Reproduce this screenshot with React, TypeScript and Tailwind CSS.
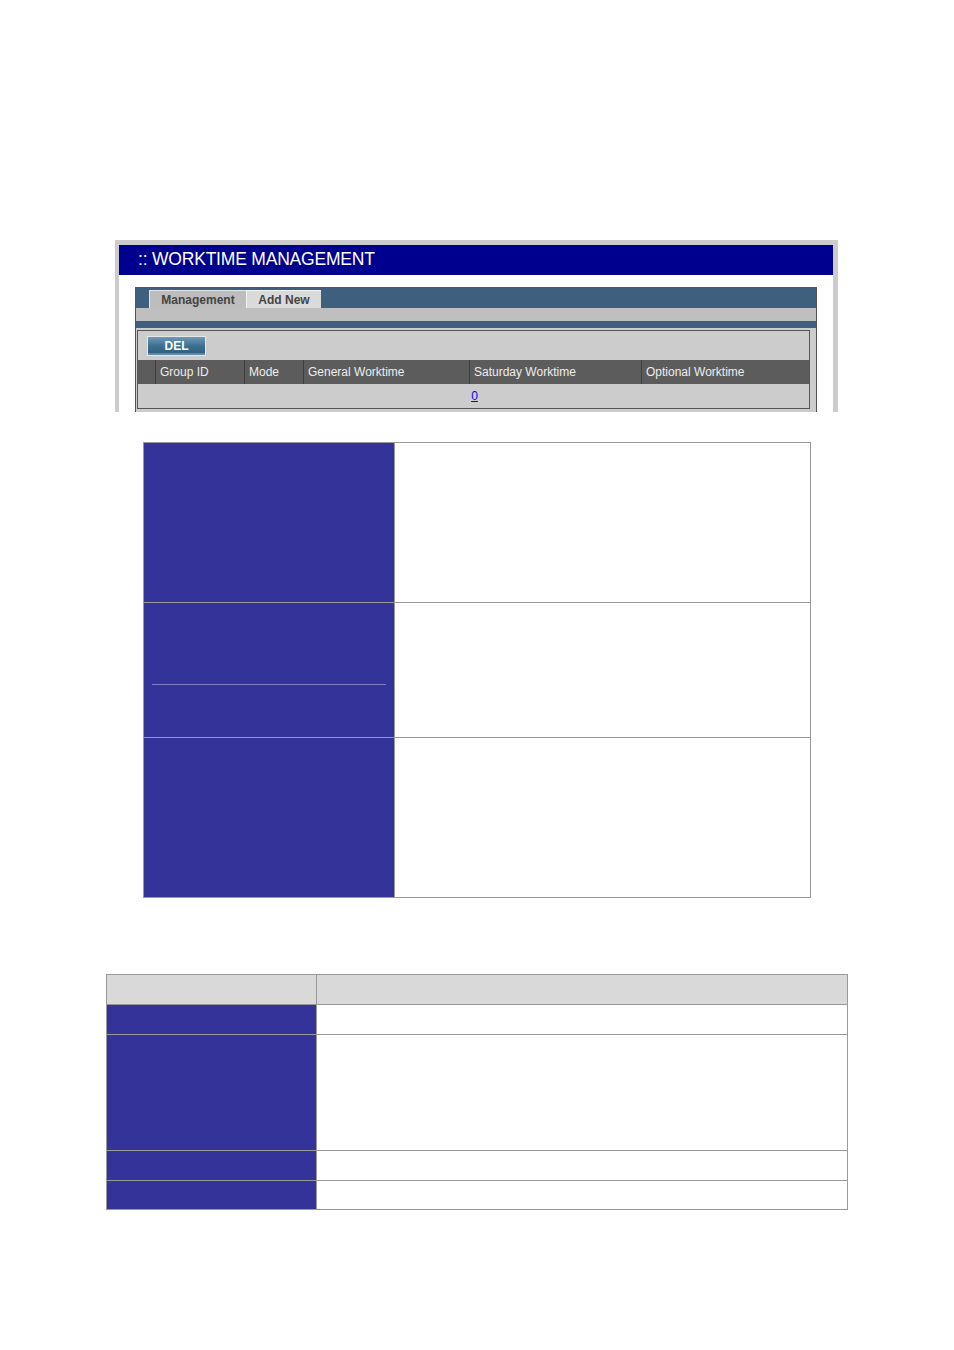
import React from 'react'

const cols = [
  { label: '', w: 'w-[18px]' },
  { label: 'Group ID', w: 'w-[89px]' },
  { label: 'Mode', w: 'w-[59px]' },
  { label: 'General Worktime', w: 'w-[166px]' },
  { label: 'Saturday Worktime', w: 'w-[172px]' },
  { label: 'Optional Worktime', w: 'flex-1' },
]

function WorktimeFrame() {
  return (
    <div className="ml-[115px] w-[723px] h-[172px] overflow-hidden bg-[#cccccc] pt-[5px] px-[4px]">
      <div className="bg-white h-[200px] mr-[1px]">
        <div className="h-[30px] bg-[#00008f] flex items-center pl-[19px] text-white text-[17.5px] leading-none tracking-[-0.2px]">
          :: WORKTIME MANAGEMENT
        </div>
        <div className="ml-[16px] w-[682px] mt-[12px] border border-[#555] bg-[#cccccc] h-[200px]">
          {/* tabs */}
          <div className="h-[20px] bg-[#3f5f7f] flex items-end pl-[13px]">
            <div className="h-[18px] w-[97px] bg-[#bdbdbd] border-t border-l border-[#e5e5e5] flex items-center justify-center text-[12px] font-bold text-[#444]">
              Management
            </div>
            <div className="h-[18px] w-[75px] bg-[#dadada] border-t border-l border-[#f2f2f2] flex items-center justify-center text-[12px] font-bold text-[#444]">
              Add New
            </div>
          </div>
          <div className="h-[13px] bg-[#bfbfbf]" />
          <div className="h-[7px] bg-[#3f5f7f]" />
          <div className="mt-[2px] ml-[1px] w-[673px] border border-[#555] bg-[#cccccc]">
            <div className="h-[29px] pl-[9px] flex items-center">
              <div className="w-[59px] h-[20px] border border-[#e8e8e8] bg-gradient-to-b from-[#6d9ab8] via-[#3f6f90] to-[#2e5a78] flex items-center justify-center text-white font-bold text-[12px] shadow-[inset_0_-2px_0_#5c8aa8]">
                DEL
              </div>
            </div>
            <div className="h-[24px] bg-[#5c5c5c] flex text-[12px] text-[#eeeeee]">
              {cols.map((c, i) => (
                <div
                  key={i}
                  className={`${c.w} h-full flex items-center pl-[4px] ${i < cols.length - 1 ? 'border-r border-[#3e3e3e]' : ''}`}
                >
                  {c.label}
                </div>
              ))}
            </div>
            <div className="h-[24px] flex items-center justify-center text-[12px]">
              <a href="#" className="text-[#0000ee] underline pl-[2px]">0</a>
            </div>
          </div>
        </div>
      </div>
    </div>
  )
}

function BlueTable({ rows }: { rows: number[] }) {
  return (
    <div className="ml-[143px] w-[668px] border border-[#999] border-b-0">
      {rows.map((h, i) => (
        <div key={i} className="flex border-b border-[#999]" style={{ height: h }}>
          <div className="w-[251px] bg-[#333399] border-r border-[#999] relative">
            {i === 1 && (
              <div className="absolute left-[8px] right-[8px] top-[81px] h-px bg-[#8080c0]" />
            )}
          </div>
          <div className="flex-1 bg-white" />
        </div>
      ))}
    </div>
  )
}

export default function App() {
  return (
    <div className="w-[954px] h-[1350px] bg-white font-['Liberation_Sans',Arial,sans-serif] pt-[240px]">
      <WorktimeFrame />
      <div className="mt-[30px]">
        <BlueTable rows={[160, 135, 160]} />
      </div>
      <div className="mt-[76px] ml-[106px] w-[742px] border border-[#999] border-b-0">
        <div className="h-[30px] flex bg-[#d9d9d9] border-b border-[#999]">
          <div className="w-[210px] border-r border-[#999]" />
          <div className="flex-1" />
        </div>
        {[30, 116, 30, 29].map((h, i) => (
          <div key={i} className="flex border-b border-[#999]" style={{ height: h }}>
            <div className="w-[210px] bg-[#333399] border-r border-[#999]" />
            <div className="flex-1 bg-white" />
          </div>
        ))}
      </div>
    </div>
  )
}
